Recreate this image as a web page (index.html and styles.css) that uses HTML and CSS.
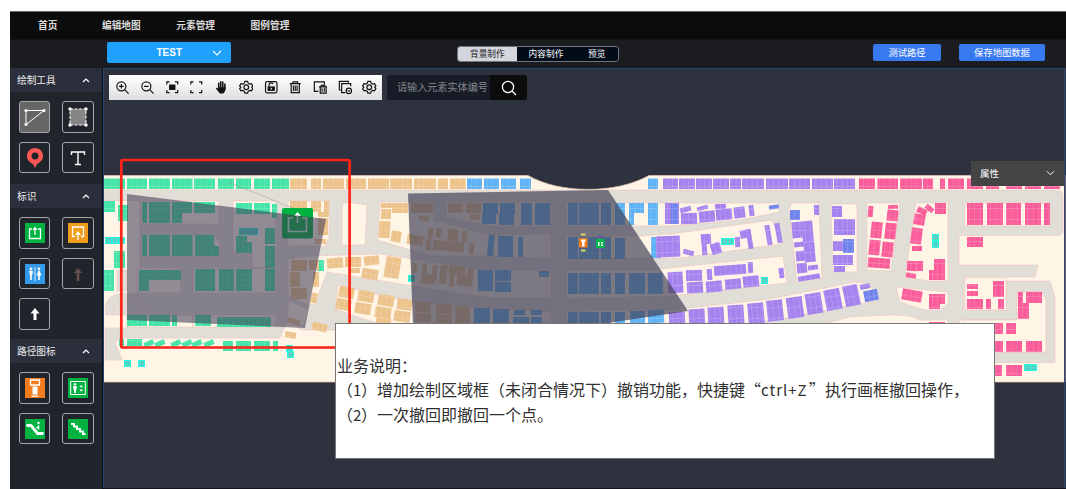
FILE: index.html
```html
<!DOCTYPE html>
<html lang="zh-CN">
<head>
<meta charset="utf-8">
<title>地图编辑</title>
<link rel="stylesheet" href="styles.css">
</head>
<body>
<div class="app">
  <nav class="nav"><a>首页</a><a>编辑地图</a><a>元素管理</a><a>图例管理</a></nav>
  <header class="bar">
    <button class="project"><span>TEST</span><svg class="chev" viewBox="0 0 10 6"><path d="M1 1l4 4 4-4"/></svg></button>
    <div class="tabs"><span class="tab active">背景制作</span><span class="tab">内容制作</span><span class="tab last">预览</span></div>
    <div class="actions"><button class="btn test">测试路径</button><button class="btn save">保存地图数据</button></div>
  </header>
  <div class="main">
    <aside class="side">
      <section class="group first">
        <h2>绘制工具<svg class="up" viewBox="0 0 8 6"><path d="M1 5l3-3 3 3"/></svg></h2>
        <div class="grid">
          <div class="tool on"><svg viewBox="0 0 32 32"><path d="M7 9.500H25L7 23.500Z" fill="none" stroke="#fff" stroke-width="1"/><g fill="#fff"><circle cx="7" cy="9.500" r="1.600"/><circle cx="25" cy="9.500" r="1.600"/><circle cx="7" cy="23.500" r="1.600"/></g></svg></div>
          <div class="tool"><svg viewBox="0 0 32 32"><path d="M8 8H24V24H8Z" fill="#858585" stroke="#fff" stroke-dasharray="3 1.500"/><g fill="#fff"><circle cx="8" cy="8" r="1.700"/><circle cx="24" cy="8" r="1.700"/><circle cx="8" cy="24" r="1.700"/><circle cx="24" cy="24" r="1.700"/></g></svg></div>
          <div class="tool"><svg viewBox="0 0 32 32"><path fill="#ff5757" fill-rule="evenodd" d="M16 6a8 8 0 0 0-8 8c0 4 3 6.500 6 8l2 4 2-4c3-1.500 6-4 6-8a8 8 0 0 0-8-8zm0 4.500a3.500 3.500 0 1 1 0 7 3.500 3.500 0 0 1 0-7z"/></svg></div>
          <div class="tool"><svg viewBox="0 0 32 32"><path d="M9.500 13V10H22.500V13M16 10V22.500M13 22.500H19" fill="none" stroke="#fff" stroke-width="1.400"/></svg></div>
        </div>
      </section>
      <section class="group second">
        <h2>标识<svg class="up" viewBox="0 0 8 6"><path d="M1 5l3-3 3 3"/></svg></h2>
        <div class="grid">
          <div class="tool"><svg viewBox="0 0 32 32"><path fill="#00b341" d="M6 6h20v20H6z"/><path d="M13 12H10.500V21.500H21.500V12H19M16 18V12" fill="none" stroke="#fff" stroke-width="1.300"/><path d="M13.500 13l2.500-3.500 2.500 3.500z" fill="#fff"/></svg></div>
          <div class="tool"><svg viewBox="0 0 32 32"><path fill="#f09c1c" d="M6 6h20v20H6z"/><path d="M13 19.500H10.500V10H21.500V19.500H19M16 23V17" fill="none" stroke="#fff" stroke-width="1.300"/><path d="M13 18l3-4 3 4z" fill="#fff"/></svg></div>
          <div class="tool"><svg viewBox="0 0 32 32"><path fill="#3399ea" d="M6 6h20v20H6z"/><path stroke="#fff" stroke-width=".8" d="M16 9V23"/><g fill="#fff"><circle cx="12" cy="11" r="1.400"/><path d="M10 13h4l-.8 4h-.4v5h-1.600v-5h-.4z"/><circle cx="20" cy="11" r="1.400"/><path d="M19.200 13h1.600l1.500 4.500h-1.500V22h-1.600v-4.500h-1.500z"/></g></svg></div>
          <div class="tool"><svg viewBox="0 0 32 32"><path fill="#684e4f" d="M16 10l4 5h-2.700v8h-2.600v-8H12z"/></svg></div>
          <div class="tool"><svg viewBox="0 0 32 32"><path fill="#fff" d="M16 10l4.500 5.500H17.500V22h-3v-6.500H11.500z"/></svg></div>
        </div>
      </section>
      <section class="group">
        <h2>路径图标<svg class="up" viewBox="0 0 8 6"><path d="M1 5l3-3 3 3"/></svg></h2>
        <div class="grid">
          <div class="tool"><svg viewBox="0 0 32 32"><path fill="#f27c1e" d="M6 6h20v20H6z"/><path d="M11.500 8h9v5h-9z" fill="none" stroke="#fff" stroke-width="1.300"/><path fill="#fff" d="M13.500 14.500h5v8h-5zM12.500 23.500h7v1.300h-7z"/></svg></div>
          <div class="tool"><svg viewBox="0 0 32 32"><path fill="#00b341" d="M6 6h20v20H6z"/><path d="M8.700 9.500h14.600v13H8.700z" fill="none" stroke="#fff"/><circle cx="13" cy="12.300" r="1.200" fill="#fff"/><path fill="#fff" d="M11 14h4l-.5 3.500h-.5v3.500h-2v-3.500h-.5zM17.300 15.300l1.900-2.300 1.900 2.300zM17.300 17.500h3.800l-1.900 2.300z"/></svg></div>
          <div class="tool"><svg viewBox="0 0 32 32"><path fill="#00b341" d="M6 6h20v20H6z"/><path d="M8.500 12.500H12L18.500 20.500H23.500" fill="none" stroke="#fff" stroke-width="2.800" stroke-linecap="round" stroke-linejoin="round"/><path d="M19.500 12.500V16.500M17.500 14.500h2" stroke="#fff" stroke-width="1.500"/><circle cx="19.500" cy="10" r="1.200" fill="#fff"/></svg></div>
          <div class="tool"><svg viewBox="0 0 32 32"><path fill="#00b341" d="M6 6h20v20H6z"/><path d="M9 11h3v2.500h3V16h3v2.500h3V21h2.500" fill="none" stroke="#fff" stroke-width="1.900"/></svg></div>
        </div>
      </section>
    </aside>
    <main class="canvas">
      <svg class="map" viewBox="103 68 963 421" id="map">
        <defs>
          <pattern id="walls" width="5.300" height="11" patternUnits="userSpaceOnUse"><path d="M5 0V11M0 10.500H5" stroke="#fff" stroke-opacity=".24" stroke-width=".7"/></pattern>
        </defs>
        <path class="land" d="M103 175.500H528C560 194 616 194 649 175.500H1065V382H103Z"/>
        <g class="road">
          <path d="M104 190H1057Q1063 190 1063 196V230Q1063 235.500 1057 235.500H959V265H1038L1035 277H964V310H1006V281H1050L1055 298V362.500H990V352H1046V300L1042 292H1017V320H959V325H948V320H920C905 313 895 315 850 317L800 330H300L290 315L280 338Q278 338 270 338H120L115 342L122 360H105V328H127V315H113V300Q119 293 140 293V200.500H104Z"/>
          <path d="M127 293Q105 293 105 310L106 315H113Q113 302 127 302H144V314H127Z"/>
          <path d="M117 270H127V291H117Z"/>
        </g>
        <g class="island">
          <path d="M141 201H219V226L207 224H141ZM141 235H215L220 245V257H141ZM137 268H181V293H137ZM193 268H276V293H193ZM233 201H276V268H252V253H233ZM128 315H193V327H128ZM193 315H277L273 327H193Z"/>
          <path d="M288 201H329V237L325 246H288ZM288 259L310 256 380 254 413 259 413 286 327 272 315 304 305 304 288 295ZM288 300L309 310 304 325 288 325ZM342 205L347 202 367 205 365 245H342ZM380 202H434V220L490 235 551 234V259L490 256 430 256 378 240ZM446 202H551V226H490L446 217ZM413 259L490 271 551 270V298H490L413 286Z"/>
          <path d="M338 285L412 303 551 312V326H385L335 309ZM566 203H779V212L740 220 670 226H566ZM566 236H640L671 234 772 220 782 244 680 258H566ZM566 270H650L783 256 787 283 670 296 566 299ZM566 311L670 310 770 299 855 282 868 283 880 300 780 319 700 330H566Z"/>
          <path d="M792 203H819L822 278 797 282 789 209ZM831 204H857V272L833 272ZM867 203H900L891 271 867 270ZM916 203H948V281L928 281 905 277ZM896 287L948 292V303L940 310H925L900 302ZM965 203H1050V226H965ZM965 278H1006V310H965ZM1017 292H1042L1046 300V352H965V320H1017Z"/>
        </g>
        <g id="shops"></g>
        <path d="M228 182L298 210" stroke="#8d8b88" stroke-opacity=".55" stroke-width=".8"/>
        <g class="marker"><rect x="282" y="208" width="31" height="30.500" rx="2" fill="#00b341"/><path d="M293 218H288.500V231.500H306.500V218H302M297.500 223V215" fill="none" stroke="#fff" stroke-opacity=".8" stroke-width="1.700"/><path d="M294 216L297.500 212 301 216Z" fill="#fff"/></g>
        <path class="zone" d="M127 194L326 219 305 328 127 320Z"/>
        <path class="zone deep" d="M408 193.500L608 190 688 311 414 352Z"/>
        <g><path fill="#f27c1e" d="M579 238h8.500v9.500H579z"/><path fill="#fff" d="M581 239.500h4.500v2h-1v5h-2.500v-5h-1z"/><path fill="#00b946" d="M596 239h8.500v9H596z"/><path fill="#fff" d="M598 242h1.500v4H598zM601 242h2v1.500h-2zM601 244.500h2v1.500h-2z"/><path d="M581 234.500h4.500M581 250.500h4.500" stroke="#d8de63" stroke-width="1.800"/><path d="M598.500 236.500h4M599 250.500h3" stroke="#6446b8" stroke-width="1.500"/></g>
        <rect x="121.300" y="160" width="228.300" height="187.500" rx="1.500" fill="none" stroke="#ff2318" stroke-width="2.700"/>
      </svg>
      <div class="tools">
        <span><svg viewBox="0 0 16 16"><circle cx="7" cy="7" r="5"/><path d="M10.700 10.700L15 15M4.500 7h5M7 4.500v5"/></svg></span>
        <span><svg viewBox="0 0 16 16"><circle cx="7" cy="7" r="5"/><path d="M10.700 10.700L15 15M4.500 7h5"/></svg></span>
        <span><svg viewBox="0 0 16 16"><path d="M2 5V2h3M11 2h3v3M14 11v3h-3M5 14H2v-3"/><path class="solid" d="M4.500 5h7v6h-7z"/></svg></span>
        <span><svg viewBox="0 0 16 16"><path d="M2 5V2h3M11 2h3v3M14 11v3h-3M5 14H2v-3"/></svg></span>
        <span><svg viewBox="0 0 16 16"><path d="M5.200 3.500V9M7.400 2V9M9.700 2.300V9M12 4.500V10" stroke-width="1.700" stroke-linecap="round"/><path class="solid" d="M4.400 8h8.400l-.5 4-2 3H6.500L2 9.500Q2.200 8 3.500 8.800l1 1z"/></svg></span>
        <span><svg viewBox="0 0 16 16"><path d="M6.500 1.500h3l.6 2 1.700 1 2-.5 1.500 2.500L14 8l1.300 1.500L13.800 12l-2-.5-1.700 1-.6 2h-3l-.6-2-1.700-1-2 .5L.7 9.500 2 8 .7 6.500 2.200 4l2 .5 1.700-1z"/><circle cx="8" cy="8" r="2.600"/></svg></span>
        <span><svg viewBox="0 0 16 16"><rect x="1.700" y="1.700" width="12.600" height="12.600" rx="2"/><path d="M5.500 7V5.500a2.500 2.500 0 0 1 4.700-1"/><path class="solid" d="M4 7h8v5H4z"/><path class="keyhole" d="M8 8.500v2"/></svg></span>
        <span><svg viewBox="0 0 16 16"><path d="M2 4h12M5.500 4V2h5v2M3.500 4v10h9V4M6 6v6M8 6v6M10 6v6"/></svg></span>
        <span><svg viewBox="0 0 16 16"><path d="M6 12.500H1.500V2h11v3M6.500 7.500h9M9 7.500V6h4v1.500M8 7.500V14.500h6.500v-7M10 9v4M12.500 9v4"/></svg></span>
        <span><svg viewBox="0 0 16 16"><path d="M3 11H1.500V1.500h10V3M8 14H4V4h10v3"/><circle cx="12" cy="12" r="3"/><path d="M10.500 12h3"/></svg></span>
        <span><svg viewBox="0 0 16 16"><path d="M6.500 1.500h3l.6 2 1.700 1 2-.5 1.500 2.500L14 8l1.300 1.500L13.800 12l-2-.5-1.700 1-.6 2h-3l-.6-2-1.700-1-2 .5L.7 9.500 2 8 .7 6.500 2.200 4l2 .5 1.700-1z"/><circle cx="8" cy="8" r="2.600"/></svg></span>
      </div>
      <div class="search"><span class="hint">请输入元素实体编号</span><span class="go"><svg viewBox="0 0 16 16"><circle cx="7" cy="7" r="5.600"/><path d="M11 11L15 15"/></svg></span></div>
      <div class="props"><span>属性</span><svg class="chev" viewBox="0 0 10 6"><path d="M1 1l4 4 4-4"/></svg></div>
      <div class="note"><p>业务说明：</p><p>（<i class="digit">1</i>）增加绘制区域框（未闭合情况下）撤销功能，快捷键“<i class="keys">ctrl+Z</i>”执行画框撤回操作，</p><p>（<i class="digit">2</i>）一次撤回即撤回一个点。</p></div>
    </main>
  </div>
</div>
<script src="map.js"></script>
</body>
</html>
```

FILE: styles.css
```css
* { box-sizing: border-box; }
body { margin: 0; padding: 11px 0 0 10px; background: #fff; width: 1066px; height: 489px; overflow: hidden; font-family: "Liberation Sans", "Noto Sans CJK SC", sans-serif; }
.app { height: 478px; display: flex; flex-direction: column; background: #1b1c20; color: #fff; border-top: 1px solid #66686b; }
.nav { height: 28px; background: #0c0c0c; display: flex; align-items: center; padding: 0 0 2px 28px; font-size: 9.700px; font-weight: 600; color: #dadada; white-space: nowrap; border-bottom: 1px solid #141414; }
.nav a:first-child { width: 64px; }
.nav a { width: 74.300px; }
.bar { height: 28px; display: flex; align-items: center; position: relative; }
button { border: 0; padding: 0; font-family: inherit; color: #fff; }
.project { margin-left: 97px; width: 124px; height: 21px; margin-top: -3px; background: #20a0ff; border-radius: 2px; display: flex; align-items: center; justify-content: flex-end; font-size: 10px; font-weight: 700; padding-right: 9px; gap: 30px; }
.chev { width: 10px; height: 6px; fill: none; stroke: #fff; stroke-width: 1.100; }
.tabs { margin-left: 226px; width: 162px; height: 16px; display: flex; border: 1px solid #70757c; border-radius: 3px; background: #020b18; font-size: 8.700px; line-height: 14px; overflow: hidden; white-space: nowrap; }
.tab { width: 59px; text-align: center; }
.tab.active { background: #d4d6dd; color: #222; }
.tab.last { width: 43px; }
.actions { margin-left: 254px; display: flex; gap: 18px; margin-top: -3px; }
.btn { height: 17px; background: #3979ef; border-radius: 2px; font-size: 9.300px; line-height: 16px; white-space: nowrap; }
.test { width: 68px; }
.save { width: 86px; }
.main { height: 421px; display: flex; }
.side { width: 93px; background: #21242b; border-right: 1px solid #0b0c0e; flex: none; }
.group.first { height: 116px; }
.group.second { height: 155px; }
.group h2 { margin: 0; height: 24px; background: #2b2f3b; display: flex; align-items: center; justify-content: space-between; padding: 0 12px 0 7px; font-size: 9.700px; font-weight: 400; color: #ececec; }
.up { width: 8px; height: 6px; fill: none; stroke: #fff; stroke-width: 1.200; }
.grid { display: grid; grid-template-columns: 31px 32px; column-gap: 12px; row-gap: 9px; grid-auto-rows: 31.700px; padding: 9px 0 0 9px; }
.tool { border: 1px solid #a5a7aa; border-radius: 3px; display: flex; align-items: center; justify-content: center; }
.tool svg { width: 32px; height: 32px; flex: none; }
.tool.on { background: #666; }
.canvas { flex: 1; position: relative; background: #2d323e; border-bottom: 1px solid #16141d; }
.canvas::after { content: ""; position: absolute; inset: 0 1px 0 0; border: 1px solid #2d4774; border-width: 1px 1px 0 1px; pointer-events: none; }
.map { position: absolute; left: 0; top: 0; width: 963px; height: 421px; display: block; }
.land { fill: #fff5e7; stroke: #eac5b5; stroke-width: .7; }
.road path { fill: #e1ded7; stroke: #efc5bd; stroke-width: .6; }
.island path { fill: #fff5e7; stroke: #efc5bd; stroke-width: .6; }
.green { fill: #44e3a8; }
.orange { fill: #edc38c; }
.blue { fill: #5fb3f5; }
.purple { fill: #a583ef; }
.indigo { fill: #7184ed; }
.pink { fill: #fa5d99; }
.cyan { fill: #2af5df; }
.cell { fill: none; stroke: #8fa6a2; stroke-width: .8; }
.zone { fill: rgba(61, 58, 82, .57); }
.zone.deep { fill: rgba(64, 62, 82, .68); }
.tools { position: absolute; left: 6px; top: 7px; width: 273px; height: 25px; background: linear-gradient(#fff, #dedee0); display: flex; padding-left: 1px; }
.tools span { flex: 1; display: flex; align-items: center; justify-content: center; }
.tools svg { width: 14.500px; height: 14.500px; fill: none; stroke: #111; stroke-width: 1.300; }
.tools .solid { fill: #111; stroke: none; }
.tools .keyhole { stroke: #fff; }
.search { position: absolute; left: 284px; top: 7px; width: 140px; height: 25px; background: #181c27; border-radius: 3px; display: flex; overflow: hidden; }
.hint { width: 103px; padding-left: 10px; font-size: 10.100px; line-height: 25px; color: #85878c; white-space: nowrap; }
.go { flex: 1; background: #0c0c0c; display: flex; align-items: center; justify-content: center; }
.go svg { width: 16px; height: 16px; fill: none; stroke: #fff; stroke-width: 1.300; }
.props { position: absolute; left: 868px; top: 93px; width: 93px; height: 24.500px; background: #444; display: flex; align-items: center; justify-content: space-between; padding: 0 9px; font-size: 9.500px; z-index: 1; }
.props .chev { width: 9px; }
.note { position: absolute; left: 232px; top: 255px; width: 660px; height: 136px; background: #fff; border: 1px solid #777; color: #303030; padding: 29px 0 0 1px; font: 16px/24px "Noto Sans CJK SC", sans-serif; text-spacing-trim: space-all; }
.note p { margin: 0; white-space: nowrap; }
.note i { font-style: normal; font-size: 15px; }
.note .digit { display: inline-block; width: 8px; }
.note .keys { display: inline-block; width: 48px; letter-spacing: 1px; }
```

FILE: map.js
```javascript
// Shop blocks per floor zone: x y width height [rotation]
const blocks = {
  green: `104 178.5 21 10.5;127 178.5 20 10.5;149 178.5 21 10.5;172 178.5 20.5 10.5;194 178.5 21 10.5;218 178.5 16 10.5;236 178.5 15 10.5;254 178.5 16 10.5;272 178.5 17 10.5;
104 201 11 11;118 205 10 16;142 202 5 21;149 202 21 21;172 202 10 21;182 202 10 11;194 202 21 11;236 203 16 11;254 203 16 11;272 204 5 14;142 235 5 21;149 235 21 21;172 235 20.5 21;195 235 19 21;214 246 5 10;236 236 11 6;236 242 16 11;265 228 10 16;265 246 10 22;114 251 11 17;104 270 10 21;139 270 42 10;139 280 10 11;195 269 20 22;219 269 15 22;236 269 16 22;265 269 10 22;
127 315 20 11;149 315 21 11;172 315 5 11;195 315 16 11;217 317 54 10;119 339 5 7;127 339 15 7;144 341 10 5 -25;155 341 10 5 -25;171 341 10 5 -25;182 341 10 5 -25;192 341 10 5 -25;204 341 10 5 -25;223 341 10 10;236 341 15 10;254 341 16 10;273 341 5 10;317 260 7 11`,
  orange: `290 178.5 17 10.5;311 178.5 10 10.5;323 178.5 21 10.5;346 178.5 20 10.5;368 178.5 21 10.5;390 178.5 22 10.5;414 178.5 22 10.5;438 178.5 10 10.5;450 178.5 15.5 10.5;
290 201 17 10;311 201 10 11;324 201 5 12;318 212 11 5;318 218 10 17;315 239 11 5;291 260 16 11;290 272 10 15;291 288 16 11;309 260 10 10;313 272 6 15;311 293 6 10 12;288 319 12 5 18;312 323 15 8 12;285 332 11 6 10;327 258 16 10 -5;345 257 16 10;351 268 9 5;364 256 15 9 -5;362 269 16 10 9;385 257 15 21 9;
339 287 15 11 11;336 299 15 11 11;358 291 16 11 10;355 303 16 11 10;378 295 16 11 9;375 307 16 11 9;397 299 15 11 8;394 311 16 11 8;376 317 15 8 9;
381 203 11 5;392 203 16 10;411 203 22 10;448 203 15 10;466 203 15 10;470 214 10 6;381 209 10 10 4;379 221 11 17 4;391 231 10 11 8;407 235 16 10 10;419 216 10 5 10;428 228 5 10 5;436 228 5 10 5;448 229 10 12 5;462 231 5 11 5;426 239 5 11 5;433 241 31 10 5;469 243 5 11 5;412 263 5 10 8;422 263 5 14;432 265 5 16 5;440 265 7 19 5;449 266 16 9 5;449 275 5 12 5;421 274 14 10 5;457 274 15 12 5;467 269 6 18 5;415 302 16 10 5;436 304 16 10 5;455 306 15 10 5;415 313 16 9 5;436 315 16 10 5;455 316 15 8 5`,
  blue: `467 178.5 15 10.5;484 178.5 15 10.5;501 178.5 15 10.5;520 178.5 11 10.5;648 178.5 10 10.5;483 203 15 11;482 214 14 10;500 203 15 11;499 214 15 11;521 203 11 22;535 203 15 22;568 203 10 22;579 203 20 22;601 203 10 22;615 203 10 22;629 203 15 10;629 213 5 12;648 203 10 22;488 235 6 21 5;498 236 15 21;518 237 5 20;568 237 10 22;579 237 20 22;601 237 10 22;615 238 10 21;651 237 10 21;478 270 15 21;495 270 16 11;495 282 16 10;539 271 10 6;568 273 10 21;579 273 20 21;601 273 10 21;615 273 10 21;629 273 16 21;648 273 15 21 -2;474 308 16 15;493 309 16 14;514 310 11 5;531 310 11 5;513 317 16 6;531 317 11 6;568 312 10 12;579 312 20 12;601 312 10 12;615 312 10 12;630 311 15 12;648 310 16 13 -3;670 203 8 21`,
  purple: `663 178.5 15 10.5;679 178.5 16 10.5;696 178.5 16 10.5;713 178.5 16 10.5;730 178.5 11 10.5;742 178.5 22 10.5;766 178.5 22 10.5;789 178.5 21 10.5;812 178.5 21 10.5;834 178.5 21 10.5;
665 203 14 21;680 207 11 5 -14;697 206 11 4 -14;715 204 11 5 -3;681 213 16 11 -2;699 211 16 11 -5;716 209 16 11 -5;734 207 11 11 -7;749 205 5 11 -7;656 236 24 21 -2;683 250 11 5 15;701 234 10 10 -4;702 244 5 11 -4;711 243 10 11 -18;735 237 5 10 -4;740 230 11 8 -10;747 229 5 20 -10;766 225 5 20 -10;776 223 5 20 -10;668 272 15 21 -3;686 270 16 11 -2;687 282 16 11 -3;707 269 5 11 -4;714 265 32 10 -4;748 262 5 11 -3;706 281 16 11 -5;725 279 16 10 -5;743 276 16 11 -6;779 268 5 10 -7;
669 312 16 13 -3;689 309 16 21 -3;708 307 16 21 -3;728 305 16 21 -4;748 303 16 21 -5;767 300 16 21 -6;787 297 16 21 -8;806 293 16 21 -9;825 289 16 21 -11;844 285 15 21 -12;
814 205 5 10 -2;792 222 10 16 -5;802 221 11 21 -5;794 242 10 5 -5;804 242 11 20 -5;796 251 10 10 -5;797 263 10 10 -5;808 265 10 5 -7;798 275 22 5 -9;832 206 10 11;834 219 21 16;833 241 10 10;833 255 20 10;834 266 11 6;860 284 10 5 -12`,
  indigo: `671 204 7 20;769 205 10 4 -8;790 210 10 10;843 239 11 14;864 290 14 11 -11`,
  pink: `859 178.5 16 10.5;877.5 178.5 20.5 10.5;900 178.5 22 10.5;923 178.5 10 10.5;940 178.5 5 10.5;948 178.5 16 10.5;967 178.5 16 10.5;986 178.5 13 10.5;1006 178.5 16 10.5;1025 178.5 16 10.5;1044 178.5 16 10.5;
868 206 5 11 5;888 205 10 4 -4;887 210 11 11 6;871 222 11 16 6;885 223 11 16 6;869 240 11 15 6;882 242 11 15 6;868 258 22 10 4;917 208 10 6 24;925 206 9 5 40;935 203 11 11;914 214 11 11 10;911 228 11 16 8;912 246 10 5;907 261 10 10 3;917 261 6 10;906 273 10 5 10;934 259 11 11;929 270 16 10;902 290 20 11 10;929 294 16 10;929 304 11 5;967 203 16 22;987 203 16 22;1006 203 15 22;1025 203 16 22;1044 203 6 22;967 237 16 10;967 284 11 5;967 291 11 5;993 281 11 16;967 299 16 10;986 299 5 10;998 299 6 10;1018 292 5 11;1026 292 16 11;1018 303 11 16;986 323 17 11;1006 323 10 11;985 341 18 11;1006 341 16 11;1026 341 16 11;985 365 17 11;1006 365 16 11;929 322 16 6`
};

// Facility cells drawn with a small inner frame
const facilities = [[105,237],[111.500,237],[118,237],[124,360],[138,360],[239,228],[245,228],[251,228],[286,345],[287,351],[408,275],[721,238],[727,238],[761,277],[932,234],[932,241],[1024,364],[1030,364]];

const NS = 'http://www.w3.org/2000/svg';
const host = document.getElementById('shops');

function rect(x, y, w, h, turn, cls, fill) {
  const r = document.createElementNS(NS, 'rect');
  r.setAttribute('x', x);
  r.setAttribute('y', y);
  r.setAttribute('width', w);
  r.setAttribute('height', h);
  if (turn) r.setAttribute('transform', `rotate(${turn} ${x + w / 2} ${y + h / 2})`);
  if (cls) r.setAttribute('class', cls);
  if (fill) r.setAttribute('fill', fill);
  host.appendChild(r);
}

for (const [color, list] of Object.entries(blocks)) {
  for (const item of list.split(';')) {
    const [x, y, w, h, turn = 0] = item.trim().split(/\s+/).map(Number);
    rect(x, y, w, h, turn, color);
    rect(x, y, w, h, turn, '', 'url(#walls)');
  }
}
for (const [x, y] of facilities) {
  rect(x, y, 7, 7, 0, 'cyan');
  rect(x + 2, y + 2, 3, 3, 0, 'cell');
}
```
